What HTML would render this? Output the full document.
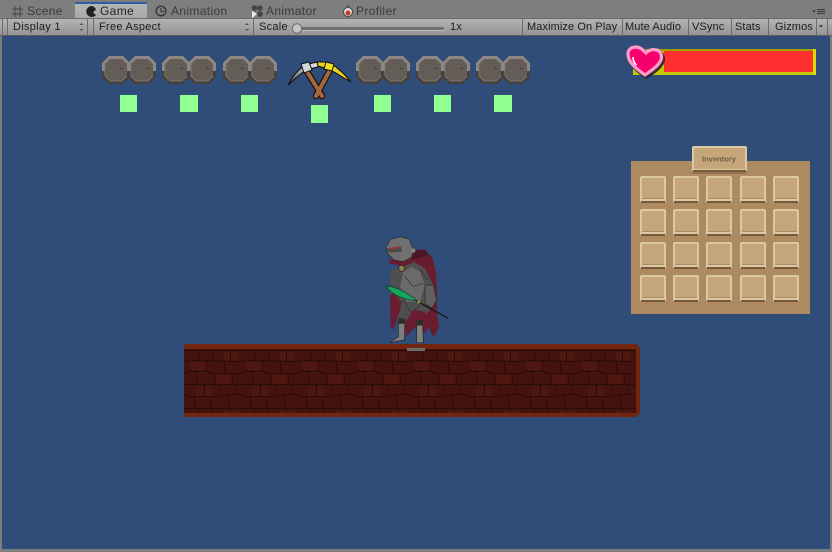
<!DOCTYPE html>
<html><head><meta charset="utf-8"><style>
html,body{margin:0;padding:0;background:#808080}
#r{position:relative;width:832px;height:552px;overflow:hidden;background:#7e7e7e;font:11px "Liberation Sans",sans-serif;letter-spacing:.1px;color:#1c1c1c}
#r div{position:absolute;white-space:nowrap}
.t{top:4px;font-size:12px;letter-spacing:.35px;color:#3a3a3a}
.b{top:21px;line-height:13px}
.l{letter-spacing:.28px}
.d{top:18px;width:1px;height:17px;background:#6c6c6c}
</style></head><body><div id="r">
<div style="left:0;top:18px;width:832px;height:18px;background:linear-gradient(#b6b6b6,#929292)"></div>
<div style="left:0;top:18px;width:832px;height:1px;background:#6a6a6a"></div>
<div style="left:0;top:35px;width:832px;height:1px;background:#5c5c5c"></div>
<div style="left:75px;top:2px;width:72px;height:16px;background:linear-gradient(#b8b8b8,#a8a8a8)"></div>
<div style="left:75px;top:2px;width:72px;height:2px;background:#2f5f9e"></div>
<div class="t" style="left:27px">Scene</div>
<div class="t" style="left:100px;color:#222">Game</div>
<div class="t" style="left:171px">Animation</div>
<div class="t" style="left:266px">Animator</div>
<div class="t" style="left:356px">Profiler</div>
<svg style="position:absolute;left:0;top:0" width="832" height="36" viewBox="0 0 832 36">
<g stroke="#444" fill="none"><path d="M15 6v11M20 6v11M12 9h11M12 14h11"/></g>
<path d="M92 6a5.500 5.500 0 1 0 4 9l-3-2.500 3-3a5.500 5.500 0 0 0-4-3.500z" fill="#222"/>
<circle cx="161" cy="11" r="4.800" fill="none" stroke="#333" stroke-width="1.300"/><path d="M161 8v3.500h3" fill="none" stroke="#333"/>
<g fill="#444"><circle cx="254.500" cy="8" r="2.800"/><circle cx="260" cy="8" r="2.800"/><circle cx="260" cy="14" r="2.800"/></g><path d="M252 11l5 3-5 4z" fill="#eee"/>
<circle cx="348" cy="12" r="4.500" fill="#ddd" stroke="#444"/><circle cx="348" cy="13" r="2.500" fill="#c0392b"/><path d="M346.500 6h3" stroke="#444"/>
<g stroke="#3a3a3a"><path d="M817 9.500h8M817 11.500h8M817 13.500h8"/></g><path d="M812 10h4l-2 3z" fill="#444"/>
<g fill="#555"><path d="M79.500 25l2-2 2 2zM79.500 29l2 2 2-2z"/><path d="M245 25l2-2 2 2zM245 29l2 2 2-2z"/></g>
<path d="M819 25h4l-2 3z" fill="#444"/>
<rect x="292" y="27" width="152" height="3" rx="1.500" fill="#6f6f6f"/>
<rect x="292" y="30" width="152" height="1" fill="#c0c0c0"/>
<circle cx="297" cy="28.500" r="4.700" fill="#c4c4c4" stroke="#666"/>
</svg>
<div class="d" style="left:2px"></div><div class="d" style="left:7px"></div><div class="d" style="left:87px"></div><div class="d" style="left:93px"></div><div class="d" style="left:253px"></div><div class="d" style="left:522px"></div><div class="d" style="left:622px"></div><div class="d" style="left:688px"></div><div class="d" style="left:731px"></div><div class="d" style="left:768px"></div><div class="d" style="left:816px"></div><div class="d" style="left:827px"></div>
<div class="b l" style="left:13px">Display 1</div>
<div class="b l" style="left:99px">Free Aspect</div>
<div class="b l" style="left:259px">Scale</div>
<div class="b l" style="left:450px">1x</div>
<div class="b" style="left:527px">Maximize On Play</div>
<div class="b" style="left:625px">Mute Audio</div>
<div class="b" style="left:692px">VSync</div>
<div class="b" style="left:735px">Stats</div>
<div class="b" style="left:775px">Gizmos</div>

<div style="left:2px;top:36px;width:828px;height:513px;background:#2f4d78"></div>

<svg style="position:absolute;left:0;top:0" width="832" height="552" viewBox="0 0 832 552" shape-rendering="crispEdges">
<defs>
<linearGradient id="gs" x1="0" x2="1" y1="1" y2="0"><stop offset="0" stop-color="#333"/><stop offset=".7" stop-color="#d8d8d8"/></linearGradient>
<g id="st">
<path d="M7 0h14l7 7v14l-7 7H7l-7-7V7z" fill="#47413d" shape-rendering="auto"/>
<path d="M7 0h14l7 7v8H0V7z" fill="#8e8884" shape-rendering="auto"/>
<path d="M8 3h12l5 5v12l-5 5H8l-5-5V8z" fill="#645c57" shape-rendering="auto"/>
<path d="M3 8v12l5 5h12l5-5" fill="none" stroke="#7b736e" stroke-width="1" shape-rendering="auto"/>
<rect x="18" y="12" width="3" height="1" fill="#433c38"/>
</g>
<g id="pr"><use href="#st" x="26"/><use href="#st" x="0"/></g>
<pattern id="br" width="56" height="58" patternUnits="userSpaceOnUse" x="188" y="350">
<rect width="56" height="58" fill="#44130d"/>
<g fill="#4e170f"><rect x="2" y="12" width="16" height="8"/><rect x="28" y="25" width="15" height="9"/><rect x="8" y="36" width="16" height="10"/><rect x="36" y="2" width="14" height="8"/></g>
<g fill="#2c0c08">
<rect y="0" width="56" height="1"/><rect y="10" width="30" height="1"/><rect x="26" y="11" width="30" height="1"/><rect y="21" width="24" height="1"/><rect x="20" y="23" width="36" height="1"/><rect y="34" width="56" height="1"/><rect y="46" width="38" height="1"/><rect x="34" y="44" width="22" height="1"/>
<rect x="10" y="0" width="1" height="10"/><rect x="24" y="1" width="1" height="10"/><rect x="42" y="0" width="1" height="11"/><rect x="18" y="11" width="1" height="10"/><rect x="36" y="12" width="1" height="11"/><rect x="8" y="22" width="1" height="12"/><rect x="26" y="24" width="1" height="10"/><rect x="44" y="24" width="1" height="10"/><rect x="16" y="35" width="1" height="11"/><rect x="32" y="35" width="1" height="11"/><rect x="48" y="35" width="1" height="10"/><rect x="6" y="47" width="1" height="11"/><rect x="22" y="47" width="1" height="11"/><rect x="40" y="45" width="1" height="13"/>
</g>
</pattern>
<g id="sl"><rect width="26" height="27" rx="2" fill="#dcc8a2"/><rect x="1" y="25" width="24" height="2" fill="#75593a"/><rect x="2" y="2" width="22" height="21" fill="#c4a67a"/><rect x="2" y="22" width="22" height="1" fill="#a98c64"/></g>
</defs>

<use href="#pr" x="102" y="56"/><use href="#pr" x="162" y="56"/><use href="#pr" x="223" y="56"/><use href="#pr" x="356" y="56"/><use href="#pr" x="416" y="56"/><use href="#pr" x="476" y="56"/>
<g fill="#91ff91"><rect x="120" y="95" width="17" height="17"/><rect x="180" y="95" width="18" height="17"/><rect x="241" y="95" width="17" height="17"/><rect x="311" y="105" width="17" height="18"/><rect x="374" y="95" width="17" height="17"/><rect x="434" y="95" width="17" height="17"/><rect x="494" y="95" width="18" height="17"/></g>

<g shape-rendering="auto">
<path d="M306 70L322 96M330 70L316 96" stroke="#1c130e" stroke-width="6.500" fill="none" stroke-linecap="round"/>
<path d="M306 70L322 96M330 70L316 96" stroke="#a5683c" stroke-width="4" fill="none" stroke-linecap="round"/>
<path d="M288 85L294 75L300 69L308 64L318 62L318 67L309 69L303 72L296 78z" fill="url(#gs)" stroke="#0c0c0c"/>
<path d="M301 64L309 62L312 70L304 73z" fill="#d4d4d4" stroke="#111"/>
<path d="M317 62L328 62L336 67L344 74L351 82L344 78L336 73L328 69L318 66z" fill="#e8d21e" stroke="#0c0c0c"/>
<path d="M326 62L334 64L332 71L324 69z" fill="#f2dd22" stroke="#111"/>
</g>

<g shape-rendering="auto">
<rect x="633" y="49" width="183" height="26" fill="#c8c800"/>
<rect x="633" y="49" width="183" height="2" fill="#a0a000"/>
<rect x="633" y="72" width="183" height="3" fill="#c8c800"/>
<rect x="813" y="49" width="3" height="26" fill="#dcdc00"/>
<rect x="664" y="51" width="149" height="21" fill="#ff2f2f"/>
<path d="M646 79C637 73 628 66 628 56C628 49 633 47 638 47C642 47 646 49 648 53C651 50 654 49 658 50C662 50 665 54 665 59C665 67 655 74 646 79z" fill="#2a1f33" opacity=".9"/>
<path d="M645 75C637 69 628 63 628 54C628 49 632 47 636 47C640 47 643 50 646 53C649 50 652 49 656 50C659 50 661.500 53 661.500 57C661.500 64 652 70 645 75z" fill="#f5006e" stroke="#ff9ccb" stroke-width="3.200"/>
<path d="M633 57C633 60 634 63 636.500 65" stroke="#fff" stroke-width="1.700" fill="none"/>
</g>

<rect x="631" y="161" width="179" height="153" fill="#ad8a60"/>
<rect x="692" y="171" width="55" height="3" fill="#947451"/>
<rect x="692" y="146" width="55" height="26" rx="2" fill="#dcc8a2"/>
<rect x="694" y="148" width="51" height="21" fill="#c4a67a"/>
<rect x="693" y="170" width="53" height="2" fill="#75593a"/>

<use href="#sl" x="640" y="176"/><use href="#sl" x="673" y="176"/><use href="#sl" x="706" y="176"/><use href="#sl" x="740" y="176"/><use href="#sl" x="773" y="176"/>
<use href="#sl" x="640" y="209"/><use href="#sl" x="673" y="209"/><use href="#sl" x="706" y="209"/><use href="#sl" x="740" y="209"/><use href="#sl" x="773" y="209"/>
<use href="#sl" x="640" y="242"/><use href="#sl" x="673" y="242"/><use href="#sl" x="706" y="242"/><use href="#sl" x="740" y="242"/><use href="#sl" x="773" y="242"/>
<use href="#sl" x="640" y="275"/><use href="#sl" x="673" y="275"/><use href="#sl" x="706" y="275"/><use href="#sl" x="740" y="275"/><use href="#sl" x="773" y="275"/>
<text x="719" y="161.500" text-anchor="middle" font-family="Liberation Sans" font-size="7.500" font-weight="bold" fill="#6f5d44" letter-spacing="0">Inventory</text>

<path d="M184 344H636L640 348V413L636 417H184z" fill="#722610"/>
<rect x="184" y="349" width="452" height="64" fill="url(#br)"/>
<rect x="407" y="348" width="18" height="3" fill="#6c6c6c"/>

<g transform="translate(370 230) scale(.3333)" shape-rendering="auto">
<path d="M130 60L165 58L188 85L198 130L202 200L200 250L208 290L190 322L176 290L165 310L155 280L150 200L120 110L85 105L55 90L75 85L110 85z" fill="#681c2e"/>
<path d="M135 62L165 60L185 85L170 75L150 85L120 100z" fill="#4a1524"/>
<path d="M85 115L130 95L165 115L190 165L192 220L165 260L155 295L125 290L95 290L68 250L62 190L60 120z" fill="#4f4f4f"/>
<path d="M100 125L125 110L150 125L165 165L150 215L110 215L90 170z" fill="#6a6a6a"/>
<path d="M150 120L175 150M105 140L130 170L160 160M100 210L125 250L150 225" stroke="#2b2b2b" stroke-width="2" fill="none"/>
<path d="M165 165L190 165L200 210L185 235L165 220z" fill="#606060" stroke="#2b2b2b" stroke-width="2"/>
<path d="M60 195L70 190L95 215L90 240L70 300L62 290z" fill="#6a1c30"/>
<path d="M130 240L165 245L175 270L160 310L145 290L125 300L110 320L100 285z" fill="#6a1c30"/>
<path d="M85 265H105V280H85zM140 270H158V285H140z" fill="#2c2c2c"/>
<path d="M85 280L105 280L103 330L60 338L85 320z" fill="#7c7c7c" stroke="#222" stroke-width="2"/>
<path d="M140 285L158 285L160 338H140z" fill="#808080" stroke="#222" stroke-width="2"/>
<path d="M55 100L100 108L125 100L150 82L130 88L110 85H70z" fill="#681c2e"/>
<circle cx="95" cy="115" r="9" fill="#8a8250" stroke="#1d1d1d" stroke-width="2"/>
<path d="M48 50L62 28L92 20L118 28L130 58L125 82L100 95L72 90L52 70z" fill="#707070" stroke="#262626" stroke-width="2"/>
<path d="M50 55L93 48L96 66L56 68z" fill="#4a4a4a"/>
<path d="M55 56L92 52" stroke="#b03030" stroke-width="4"/>
<circle cx="130" cy="62" r="6" fill="#888"/>
<path d="M48 168C80 170 115 190 140 212C105 210 65 195 48 168z" fill="#17a65c" stroke="#0f3a24" stroke-width="2"/>
<path d="M138 212L235 265" stroke="#151515" stroke-width="4"/>
<circle cx="146" cy="216" r="4" fill="#a88b4a"/>
</g>
</svg>
</div></body></html>
